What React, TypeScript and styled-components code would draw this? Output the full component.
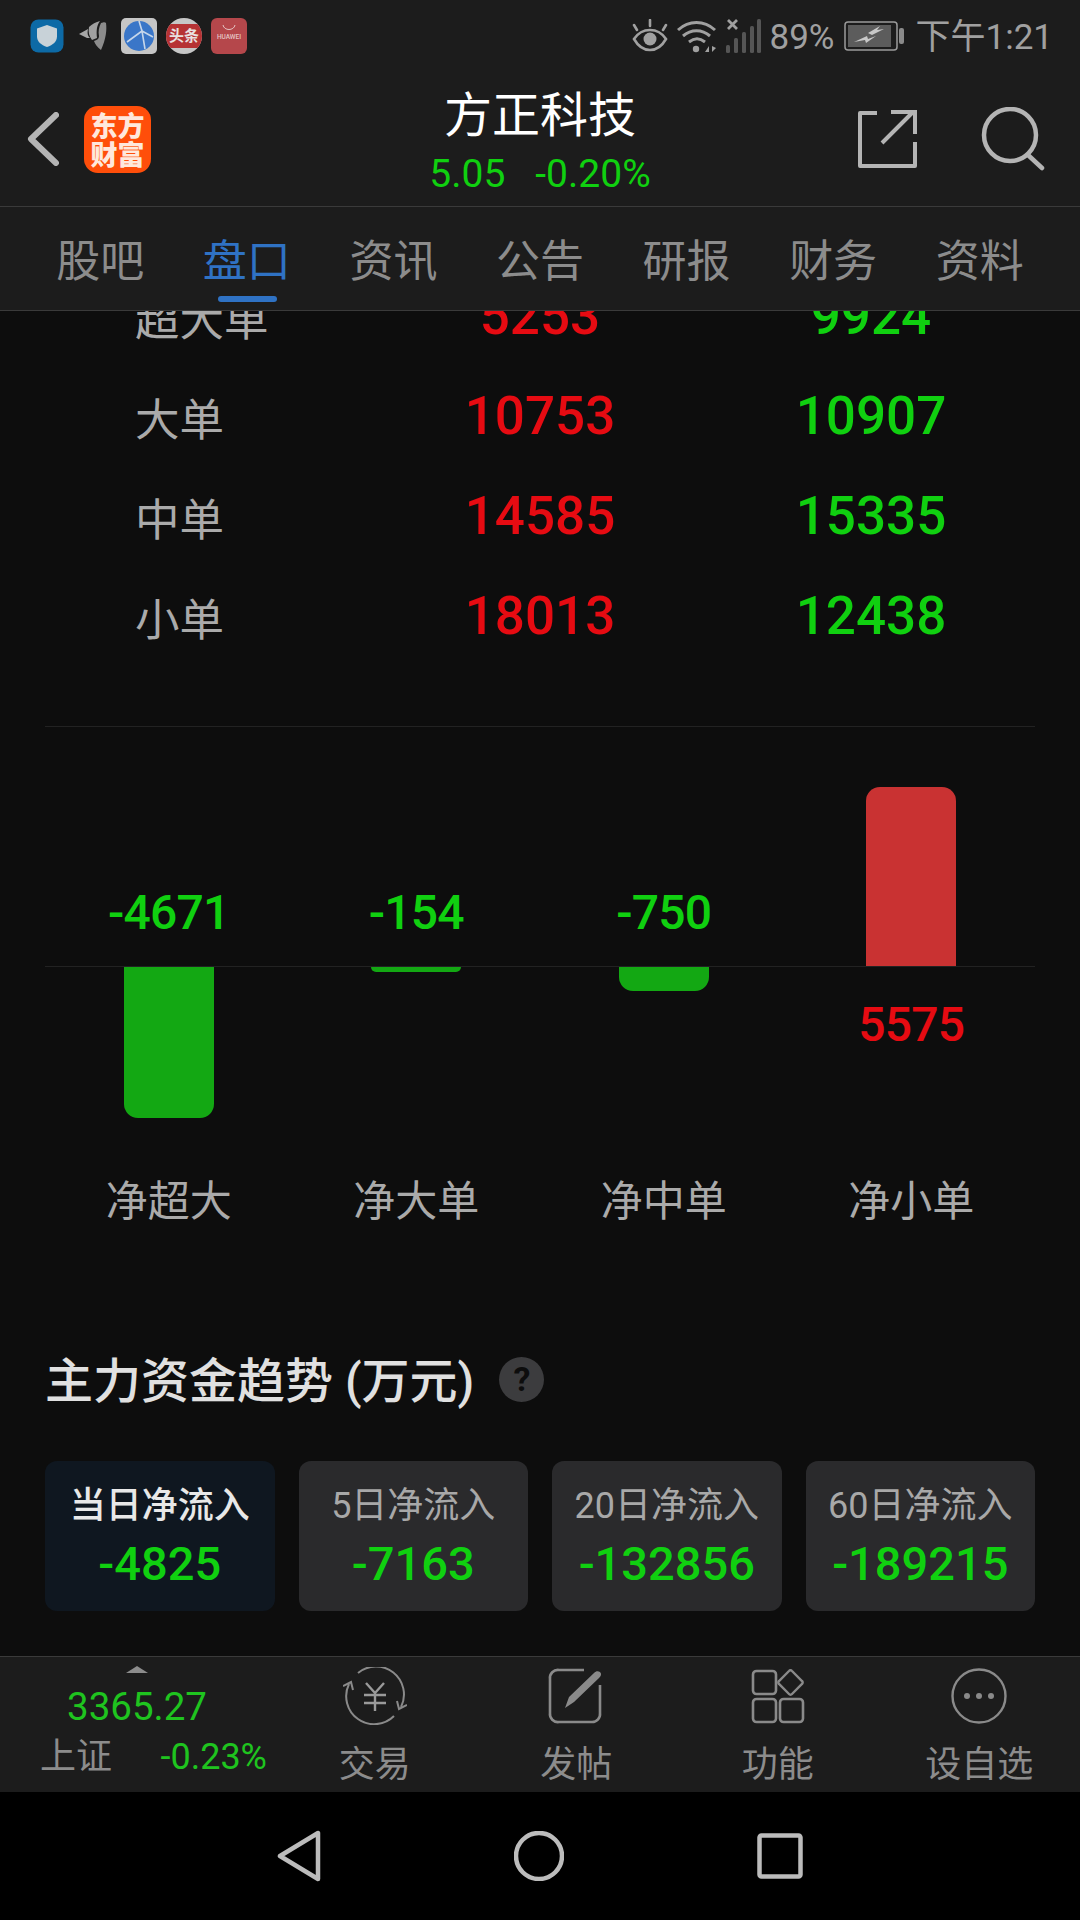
import React from "react"
import styled, { createGlobalStyle } from "styled-components"

const GREEN = "#10d010"
const RED = "#e60b12"
const FONT = `Roboto, "Noto Sans CJK SC", sans-serif`

const GlobalStyle = createGlobalStyle`
  html, body {
    margin: 0;
    padding: 0;
    background: #000000;
  }
  * {
    box-sizing: border-box;
  }
`

const TABS = ["股吧", "盘口", "资讯", "公告", "研报", "财务", "资料"]

const ORDERS = [
  { name: "超大单", buy: 5253, sell: 9924 },
  { name: "大单", buy: 10753, sell: 10907 },
  { name: "中单", buy: 14585, sell: 15335 },
  { name: "小单", buy: 18013, sell: 12438 },
]

const NET_FLOWS = [
  { name: "净超大", value: -4671 },
  { name: "净大单", value: -154 },
  { name: "净中单", value: -750 },
  { name: "净小单", value: 5575 },
]

const TRENDS = [
  { name: "当日净流入", value: "-4825", active: true },
  { name: "5日净流入", value: "-7163", active: false },
  { name: "20日净流入", value: "-132856", active: false },
  { name: "60日净流入", value: "-189215", active: false },
]

const BAR_SCALE = 180 / 5575

const StatusIcons = () => (
  <S.StatusLeft>
    <svg width="34" height="34" viewBox="0 0 34 34">
      <rect x="0.5" y="0.5" width="33" height="33" rx="8" fill="#0d6aa6" />
      <path d="M17 6l10 3.500v8c0 5-4 8.500-10 10.500-6-2-10-5.500-10-10.500v-8z" fill="#c8d2d8" />
    </svg>
    <svg width="30" height="32" viewBox="0 0 30 32">
      <path d="M1 14l9-5c-1 5 0 7 2 9l-3 0z" fill="#a8a8a8" />
      <path d="M11 7c3-3 7-5 11-6-3 4-4 9-3 17l-5 2c-3-4-4-8-3-13z" fill="#a0a0a0" />
      <path d="M23 3c3-1 4-1 5 0 1 7 0 16-5 27-4-3-6-6-7-9 4-1 5-3 5-5-1-5 0-9 2-13z" fill="#8c8c8c" />
    </svg>
    <svg width="36" height="36" viewBox="0 0 36 36">
      <rect width="36" height="36" rx="5" fill="#c6c6c6" />
      <circle cx="18" cy="18" r="15" fill="#3a76c8" />
      <path d="M6 24l15-11 3 18M21 13l-3-10M21 13l11 6" stroke="#c6d6ea" strokeWidth="1.600" fill="none" />
    </svg>
    <S.RoundBadge>
      <S.RoundBadgeBand>头条</S.RoundBadgeBand>
    </S.RoundBadge>
    <S.HuaweiBadge>
      <svg width="14" height="7" viewBox="0 0 14 7">
        <path d="M1 1c1 6 11 6 12 0" stroke="#e4c4c4" strokeWidth="1" fill="none" />
      </svg>
      <span>HUAWEI</span>
    </S.HuaweiBadge>
  </S.StatusLeft>
)

const StatusRight = () => (
  <S.StatusRight>
    <svg width="36" height="34" viewBox="0 0 36 34">
      <path d="M2 20c4-6 9-9 16-9s12 3 16 9c-4 7-9 11-16 11S6 27 2 20z" fill="none" stroke="#a0a0a0" strokeWidth="2.600" />
      <circle cx="18" cy="20" r="6.500" fill="#a0a0a0" />
      <path d="M5 11L2 6M18 7V1M31 11l3-5" stroke="#a0a0a0" strokeWidth="2.600" strokeLinecap="round" />
    </svg>
    <S.WifiIcon width="40" height="34" viewBox="0 0 40 34">
      <path d="M1 11c11-10 26-10 37 0M6 17c8-7 19-7 27 0M12 23c5-4 11-4 16 0" fill="none" stroke="#a0a0a0" strokeWidth="3" />
      <circle cx="19" cy="30" r="3.200" fill="#a0a0a0" />
      <path d="M28 33l4-6v6zM35 27l4 2-4 4z" fill="#a0a0a0" />
    </S.WifiIcon>
    <S.SignalIcon width="36" height="36" viewBox="0 0 36 36">
      <path d="M2 2l9 9M11 2l-9 9" stroke="#a0a0a0" strokeWidth="2.800" />
      <rect x="0" y="27" width="4" height="8" rx="1.500" fill="#555555" />
      <rect x="8" y="20" width="4" height="15" rx="1.500" fill="#555555" />
      <rect x="16" y="14" width="4" height="21" rx="1.500" fill="#555555" />
      <rect x="24" y="8" width="4" height="27" rx="1.500" fill="#555555" />
      <rect x="31" y="1" width="4" height="34" rx="1.500" fill="#555555" />
    </S.SignalIcon>
    <S.StatusText>89%</S.StatusText>
    <S.BatteryIcon width="62" height="30" viewBox="0 0 62 30">
      <rect x="1" y="1" width="52" height="28" rx="3" fill="none" stroke="#9a9a9a" strokeWidth="1.500" />
      <rect x="4" y="4" width="43" height="22" fill="#5c5c5c" />
      <rect x="55" y="7" width="5" height="16" rx="2" fill="#8a8a8a" />
      <path d="M10 21l13-6 1 3 8-3-10 7-1-3zM24 12l12-7-3 4 7-1-12 6z" fill="#c8c8c8" />
    </S.BatteryIcon>
    <S.ClockText>下午1:21</S.ClockText>
  </S.StatusRight>
)

const TradeIcon = () => (
  <svg width="64" height="58" viewBox="0 0 64 58">
    <path d="M15 6A28 28 0 0 1 58 40" fill="none" stroke="#8a8a8a" strokeWidth="2" />
    <path d="M51 49A28 28 0 0 1 6 17" fill="none" stroke="#8a8a8a" strokeWidth="2" />
    <path d="M0 19l8-4 2 8M64 38l-8 4-2-8" fill="none" stroke="#8a8a8a" strokeWidth="2" />
    <path d="M23 16l9 10 9-10M21 28h22M21 36h22M32 26v18" fill="none" stroke="#9a9a9a" strokeWidth="2.400" />
  </svg>
)

const PostIcon = () => (
  <svg width="56" height="56" viewBox="0 0 56 56">
    <path d="M36 2H11a8 8 0 0 0-9 9v34a8 8 0 0 0 9 9h33a8 8 0 0 0 8-9V17" fill="none" stroke="#8a8a8a" strokeWidth="2.600" />
    <path d="M17 40l4-11L46 5c2-2 4-2 6-1 2 2 1 4-1 6L26 34z" fill="#8a8a8a" />
  </svg>
)

const ToolsIcon = () => (
  <svg width="54" height="56" viewBox="0 0 54 56">
    <rect x="2" y="3" width="23" height="23" rx="3.500" fill="none" stroke="#8a8a8a" strokeWidth="2.600" />
    <rect x="2" y="31" width="23" height="23" rx="3.500" fill="none" stroke="#8a8a8a" strokeWidth="2.600" />
    <rect x="29" y="31" width="23" height="23" rx="3.500" fill="none" stroke="#8a8a8a" strokeWidth="2.600" />
    <path d="M38 3a2 2 0 0 1 3 0l10 10a2 2 0 0 1 0 3L41 26a2 2 0 0 1-3 0L28 16a2 2 0 0 1 0-3z" fill="none" stroke="#8a8a8a" strokeWidth="2.400" />
  </svg>
)

const MoreIcon = () => (
  <svg width="56" height="56" viewBox="0 0 56 56">
    <circle cx="28" cy="28" r="26.500" fill="none" stroke="#8a8a8a" strokeWidth="2.400" />
    <circle cx="16" cy="28" r="3" fill="#8a8a8a" />
    <circle cx="28" cy="28" r="3" fill="#8a8a8a" />
    <circle cx="40" cy="28" r="3" fill="#8a8a8a" />
  </svg>
)

const ACTIONS = [
  { name: "交易", icon: <TradeIcon /> },
  { name: "发帖", icon: <PostIcon /> },
  { name: "功能", icon: <ToolsIcon /> },
  { name: "设自选", icon: <MoreIcon /> },
]

export default function App() {
  return (
    <S.Page>
      <GlobalStyle />
      <S.StatusBar>
        <StatusIcons />
        <StatusRight />
      </S.StatusBar>

      <S.Header>
        <S.HeaderLeft>
          <svg width="32" height="54" viewBox="0 0 32 54">
            <path d="M29 3L4 27l25 24" fill="none" stroke="#b4b4b4" strokeWidth="6" strokeLinecap="round" strokeLinejoin="round" />
          </svg>
          <S.Logo>
            <span>东方</span>
            <span>财富</span>
          </S.Logo>
        </S.HeaderLeft>
        <S.HeaderCenter>
          <S.StockName>方正科技</S.StockName>
          <S.StockQuote>
            <span>5.05</span>
            <span>-0.20%</span>
          </S.StockQuote>
        </S.HeaderCenter>
        <S.HeaderRight>
          <svg width="60" height="60" viewBox="0 0 60 60">
            <path d="M20 4H3v53h55V33" fill="none" stroke="#b4b4b4" strokeWidth="4" strokeLinejoin="round" />
            <path d="M25 34L56 3M34 3h24v22" fill="none" stroke="#b4b4b4" strokeWidth="4" />
          </svg>
          <svg width="64" height="64" viewBox="0 0 64 64">
            <circle cx="29" cy="28" r="26" fill="none" stroke="#b4b4b4" strokeWidth="4.500" />
            <path d="M47 48l14 13" stroke="#b4b4b4" strokeWidth="4.500" strokeLinecap="round" />
          </svg>
        </S.HeaderRight>
      </S.Header>

      <S.Tabs>
        {TABS.map((tab) => (
          <S.Tab key={tab} $active={tab === "盘口"}>
            {tab}
          </S.Tab>
        ))}
      </S.Tabs>

      <S.Content>
        <S.OrderTable>
          {ORDERS.map((row) => (
            <S.OrderRow key={row.name}>
              <S.OrderName>{row.name}</S.OrderName>
              <S.OrderValue $color={RED}>{row.buy}</S.OrderValue>
              <S.OrderValue $color={GREEN}>{row.sell}</S.OrderValue>
            </S.OrderRow>
          ))}
        </S.OrderTable>

        <S.Divider />

        <S.Chart>
          <S.Axis />
          {NET_FLOWS.map((item) => {
            const negative = item.value < 0
            const barHeight = Math.abs(item.value) * BAR_SCALE
            return (
              <S.ChartColumn key={item.name}>
                <S.PlotUp>
                  {negative ? (
                    <S.BarValue $color={GREEN} $below={false}>{item.value}</S.BarValue>
                  ) : (
                    <S.Bar $negative={false} style={{ height: barHeight }} />
                  )}
                </S.PlotUp>
                <S.PlotDown>
                  {negative ? (
                    <S.Bar $negative style={{ height: barHeight }} />
                  ) : (
                    <S.BarValue $color={RED} $below>{item.value}</S.BarValue>
                  )}
                </S.PlotDown>
                <S.ChartLabel>{item.name}</S.ChartLabel>
              </S.ChartColumn>
            )
          })}
        </S.Chart>

        <S.SectionTitle>
          <span>主力资金趋势 (万元)</span>
          <S.HelpBadge>?</S.HelpBadge>
        </S.SectionTitle>

        <S.Cards>
          {TRENDS.map((card) => (
            <S.Card key={card.name} $active={card.active}>
              <S.CardLabel $active={card.active}>{card.name}</S.CardLabel>
              <S.CardValue>{card.value}</S.CardValue>
            </S.Card>
          ))}
        </S.Cards>
      </S.Content>

      <S.BottomBar>
        <S.IndexBlock>
          <S.IndexArrow />
          <S.IndexPrice>3365.27</S.IndexPrice>
          <S.IndexMeta>
            <S.IndexName>上证</S.IndexName>
            <S.IndexChange>-0.23%</S.IndexChange>
          </S.IndexMeta>
        </S.IndexBlock>
        {ACTIONS.map((action) => (
          <S.Action key={action.name}>
            <S.ActionIcon>{action.icon}</S.ActionIcon>
            <S.ActionLabel>{action.name}</S.ActionLabel>
          </S.Action>
        ))}
      </S.BottomBar>

      <S.NavBar>
        <svg width="44" height="52" viewBox="0 0 44 52">
          <path d="M41 3v46L3 26z" fill="none" stroke="#bcbcbc" strokeWidth="4.500" strokeLinejoin="round" />
        </svg>
        <svg width="50" height="50" viewBox="0 0 50 50">
          <circle cx="25" cy="25" r="23" fill="none" stroke="#bcbcbc" strokeWidth="4.500" />
        </svg>
        <svg width="46" height="46" viewBox="0 0 46 46">
          <rect x="2.500" y="2.500" width="41" height="41" rx="2" fill="none" stroke="#bcbcbc" strokeWidth="4.500" />
        </svg>
      </S.NavBar>
    </S.Page>
  )
}

const S = {
  Page: styled.div`
    width: 1080px;
    height: 1920px;
    display: flex;
    flex-direction: column;
    overflow: hidden;
    background: #0d0d0d;
    font-family: ${FONT};
  `,
  StatusBar: styled.div`
    height: 72px;
    flex: none;
    display: flex;
    align-items: center;
    justify-content: space-between;
    padding: 0 27px 0 30px;
    background: #1c1c1c;
  `,
  StatusLeft: styled.div`
    display: flex;
    align-items: center;
    gap: 9px;
    & > svg:nth-child(2) {
      margin: 0 4px 0 5px;
    }
  `,
  RoundBadge: styled.div`
    width: 36px;
    height: 36px;
    border-radius: 50%;
    background: #c6c6c6;
    display: flex;
    align-items: center;
    overflow: hidden;
  `,
  RoundBadgeBand: styled.span`
    width: 100%;
    height: 24px;
    background: #b63234;
    color: #e8e0e0;
    font-size: 15px;
    font-weight: 700;
    line-height: 24px;
    text-align: center;
  `,
  HuaweiBadge: styled.div`
    width: 36px;
    height: 36px;
    border-radius: 6px;
    background: #b5474b;
    color: #e4c4c4;
    display: flex;
    flex-direction: column;
    align-items: center;
    padding-top: 6px;
    gap: 2px;
    font-size: 6.500px;
    line-height: 8px;
    font-weight: 500;
  `,
  StatusRight: styled.div`
    display: flex;
    align-items: center;
    color: #a0a0a0;
  `,
  WifiIcon: styled.svg`
    margin-left: 9px;
  `,
  SignalIcon: styled.svg`
    margin-left: 9px;
  `,
  StatusText: styled.span`
    margin-left: 8px;
    padding-top: 3px;
    font-size: 35px;
    line-height: 40px;
  `,
  BatteryIcon: styled.svg`
    margin-left: 9px;
  `,
  ClockText: styled.span`
    margin-left: 10px;
    padding-top: 3px;
    font-size: 35px;
    line-height: 40px;
  `,
  Header: styled.div`
    height: 135px;
    flex: none;
    display: grid;
    grid-template-columns: 1fr auto 1fr;
    align-items: center;
    background: #1c1c1c;
    border-bottom: 1px solid #3a3a3a;
  `,
  HeaderLeft: styled.div`
    display: flex;
    align-items: center;
    gap: 25px;
    padding-left: 27px;
  `,
  Logo: styled.div`
    width: 67px;
    height: 67px;
    border-radius: 14px;
    background: #ff4e0a;
    color: #ffe8dc;
    display: flex;
    flex-direction: column;
    align-items: center;
    justify-content: center;
    font-family: "Noto Sans CJK SC", sans-serif;
    font-size: 27px;
    font-weight: 900;
    line-height: 29px;
  `,
  HeaderCenter: styled.div`
    display: flex;
    flex-direction: column;
    align-items: center;
    padding-top: 5px;
  `,
  StockName: styled.div`
    color: #ffffff;
    font-size: 48px;
    line-height: 60px;
  `,
  StockQuote: styled.div`
    display: flex;
    gap: 30px;
    margin-top: 5px;
    color: ${GREEN};
    font-size: 39px;
    line-height: 46px;
  `,
  HeaderRight: styled.div`
    display: flex;
    align-items: center;
    justify-content: flex-end;
    gap: 64px;
    padding-right: 35px;
  `,
  Tabs: styled.div`
    height: 104px;
    flex: none;
    display: grid;
    grid-template-columns: repeat(7, 1fr);
    padding: 0 27px;
    background: #1c1c1c;
    border-bottom: 1px solid #3a3a3a;
  `,
  Tab: styled.div<{ $active: boolean }>`
    position: relative;
    display: flex;
    align-items: center;
    justify-content: center;
    padding-top: 7px;
    color: ${(p) => (p.$active ? "#2f72c4" : "#8c8c8c")};
    font-size: 44px;
    line-height: 60px;
    &::after {
      content: "";
      display: ${(p) => (p.$active ? "block" : "none")};
      position: absolute;
      left: 50%;
      bottom: 8px;
      width: 59px;
      height: 6px;
      margin-left: -29px;
      border-radius: 3px;
      background: #2f72c4;
    }
  `,
  Content: styled.div`
    flex: 1;
    min-height: 0;
    overflow: hidden;
    padding: 0 45px;
    background: #0d0d0d;
  `,
  OrderTable: styled.div`
    margin-top: -45px;
  `,
  OrderRow: styled.div`
    height: 100px;
    display: grid;
    grid-template-columns: 270px 450px 212px;
    align-items: center;
    text-align: center;
  `,
  OrderName: styled.div`
    padding-left: 90px;
    color: #aaaaaa;
    font-size: 44.500px;
    text-align: left;
    white-space: nowrap;
  `,
  OrderValue: styled.div<{ $color: string }>`
    color: ${(p) => p.$color};
    font-size: 53px;
    font-weight: 500;
  `,
  Divider: styled.div`
    height: 1px;
    margin-top: 60px;
    background: #222222;
  `,
  Chart: styled.div`
    position: relative;
    margin-top: 60px;
    display: grid;
    grid-template-columns: repeat(4, 1fr);
  `,
  Axis: styled.div`
    position: absolute;
    left: 0;
    right: 0;
    top: 179px;
    height: 1px;
    background: #222222;
  `,
  ChartColumn: styled.div`
    display: flex;
    flex-direction: column;
    align-items: center;
  `,
  PlotUp: styled.div`
    height: 180px;
    display: flex;
    flex-direction: column;
    justify-content: flex-end;
    align-items: center;
  `,
  PlotDown: styled.div`
    height: 151px;
    display: flex;
    flex-direction: column;
    justify-content: flex-start;
    align-items: center;
  `,
  Bar: styled.div<{ $negative: boolean }>`
    width: 90px;
    background: ${(p) => (p.$negative ? "#13a813" : "#c93232")};
    border-radius: ${(p) => (p.$negative ? "0 0 14px 14px" : "14px 14px 0 0")};
  `,
  BarValue: styled.div<{ $color: string; $below: boolean }>`
    height: ${(p) => (p.$below ? "116px" : "108px")};
    display: flex;
    align-items: center;
    color: ${(p) => p.$color};
    font-size: 48px;
    font-weight: 500;
    letter-spacing: -0.800px;
    line-height: 56px;
  `,
  ChartLabel: styled.div`
    margin-top: 54px;
    color: #aaaaaa;
    font-size: 42px;
    line-height: 60px;
  `,
  SectionTitle: styled.div`
    margin-top: 120px;
    display: flex;
    align-items: center;
    gap: 25px;
    color: #e0e0e0;
    font-size: 48px;
    font-weight: 500;
    line-height: 60px;
  `,
  HelpBadge: styled.div`
    width: 45px;
    height: 45px;
    margin-top: -6px;
    border-radius: 50%;
    background: #3c3c3e;
    color: #0d0d0d;
    font-size: 34px;
    font-weight: 700;
    line-height: 45px;
    text-align: center;
  `,
  Cards: styled.div`
    margin-top: 49px;
    display: grid;
    grid-template-columns: repeat(4, 1fr);
    gap: 24px;
  `,
  Card: styled.div<{ $active: boolean }>`
    height: 150px;
    display: flex;
    flex-direction: column;
    align-items: center;
    padding-top: 23px;
    border-radius: 12px;
    background: ${(p) => (p.$active ? "#0f1720" : "#2a2a2c")};
  `,
  CardLabel: styled.div<{ $active: boolean }>`
    color: ${(p) => (p.$active ? "#e8e8e8" : "#a8a8a8")};
    font-size: 36px;
    font-weight: ${(p) => (p.$active ? 500 : 400)};
    line-height: 44px;
  `,
  CardValue: styled.div`
    margin-top: 6px;
    color: ${GREEN};
    font-size: 47px;
    font-weight: 500;
    line-height: 60px;
  `,
  BottomBar: styled.div`
    height: 136px;
    flex: none;
    display: grid;
    grid-template-columns: 274px repeat(4, 201.500px);
    background: #1c1c1c;
    border-top: 1px solid #3a3a3a;
  `,
  IndexBlock: styled.div`
    display: flex;
    flex-direction: column;
    align-items: center;
    padding-top: 9px;
  `,
  IndexArrow: styled.div`
    width: 0;
    height: 0;
    border-left: 11px solid transparent;
    border-right: 11px solid transparent;
    border-bottom: 7px solid #8c8c8c;
  `,
  IndexPrice: styled.div`
    margin-top: 10px;
    color: #1fc41f;
    font-size: 38.500px;
    line-height: 48px;
  `,
  IndexMeta: styled.div`
    align-self: stretch;
    display: flex;
    justify-content: space-between;
    margin-top: 2px;
    padding: 0 7px 0 40px;
    line-height: 48px;
  `,
  IndexName: styled.span`
    color: #8c8c8c;
    font-size: 36px;
  `,
  IndexChange: styled.span`
    color: #1fc41f;
    font-size: 36px;
  `,
  Action: styled.div`
    display: flex;
    flex-direction: column;
    align-items: center;
    padding-top: 10px;
  `,
  ActionIcon: styled.div`
    height: 58px;
    display: flex;
    align-items: center;
    justify-content: center;
  `,
  ActionLabel: styled.div`
    margin-top: 18px;
    color: #8c8c8c;
    font-size: 36px;
    line-height: 44px;
  `,
  NavBar: styled.div`
    height: 128px;
    flex: none;
    display: flex;
    align-items: center;
    justify-content: center;
    gap: 193px;
    background: #000000;
  `,
}
